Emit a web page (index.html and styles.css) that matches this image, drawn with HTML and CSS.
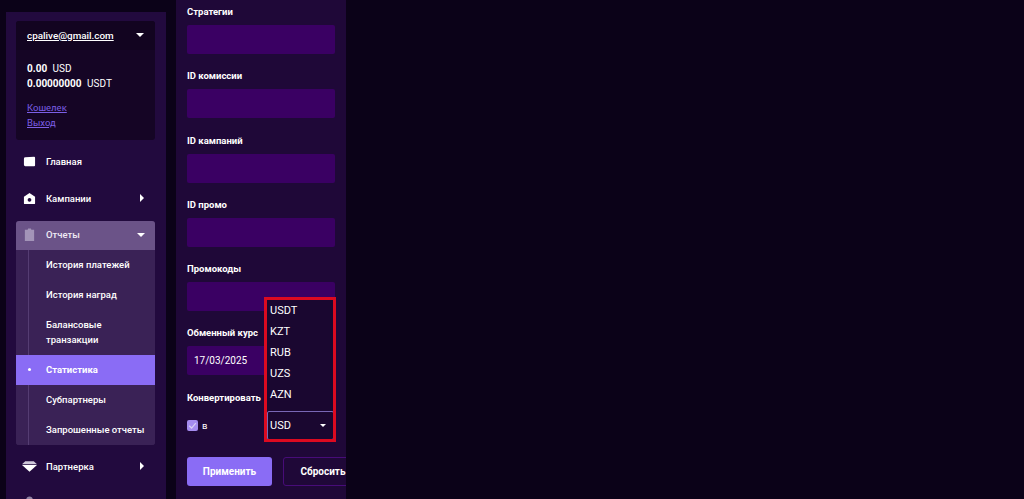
FILE: index.html
```html
<!DOCTYPE html>
<html lang="en">
<head>
    <meta charset="UTF-8">
    <meta name="viewport" content="width=device-width, initial-scale=1.0">
    <title>Статистика</title>
    <link rel="stylesheet" href="styles.css">
</head>
<body>
    <aside class="sidebar">
        <div class="account">
            <div class="account-head">
                <span class="account-email">cpalive@gmail.com</span>
                <span class="caret-down"></span>
            </div>
            <div class="account-body">
                <p class="balance"><b>0.00</b> USD</p>
                <p class="balance"><b>0.00000000</b> USDT</p>
                <a class="account-link first" href="#">Кошелек</a>
                <a class="account-link" href="#">Выход</a>
            </div>
        </div>

        <nav class="menu">
            <div class="menu-item">
                <svg class="menu-icon" viewBox="0 0 14 12"><path d="M1 3 Q1 1.500 2.500 1.500 L12 1 Q13 1 13 2 L13 10 Q13 11 12 11 L2.500 11 Q1 11 1 9.500 Z" fill="#fff"/></svg>
                <span>Главная</span>
            </div>
            <div class="menu-item">
                <svg class="menu-icon" viewBox="0 0 14 12"><path d="M7 0 L13 4 L13 11 Q13 12 12 12 L2 12 Q1 12 1 11 L1 4 Z M7 5.500 A2 2 0 1 0 7.001 5.500 Z" fill="#fff" fill-rule="evenodd"/></svg>
                <span>Кампании</span>
                <span class="caret-right"></span>
            </div>
            <div class="menu-group">
                <div class="menu-item open">
                    <svg class="menu-icon" viewBox="0 0 14 14"><path d="M2 2 L5 2 L5.500 0.500 L8.500 0.500 L9 2 L12 2 L12 14 L2 14 Z" fill="#a394b8"/></svg>
                    <span>Отчеты</span>
                    <span class="caret-down"></span>
                </div>
                <div class="submenu">
                    <a class="submenu-item">История платежей</a>
                    <a class="submenu-item">История наград</a>
                    <a class="submenu-item tall">Балансовые транзакции</a>
                    <a class="submenu-item active">Статистика</a>
                    <a class="submenu-item">Субпартнеры</a>
                    <a class="submenu-item">Запрошенные отчеты</a>
                </div>
            </div>
            <div class="menu-item">
                <svg class="menu-icon wide" viewBox="0 0 14 10"><path d="M0 3 L3 0 L11 0 L14 3 Z" fill="#cfc8da"/><path d="M0 3.500 L14 3.500 L7 10 Z" fill="#fff"/></svg>
                <span>Партнерка</span>
                <span class="caret-right"></span>
            </div>
            <div class="menu-item">
                <svg class="menu-icon" viewBox="0 0 14 14"><circle cx="7" cy="4" r="3.500" fill="#8f82a3"/></svg>
                <span class="dim">Мой</span>
            </div>
        </nav>
    </aside>

    <main class="filters">
        <label class="field-label">Стратегии</label>
        <div class="field"></div>
        <label class="field-label">ID комиссии</label>
        <div class="field"></div>
        <label class="field-label">ID кампаний</label>
        <div class="field"></div>
        <label class="field-label">ID промо</label>
        <div class="field"></div>
        <label class="field-label">Промокоды</label>
        <div class="field"></div>
        <label class="field-label">Обменный курс</label>
        <div class="field date">17/03/2025</div>
        <label class="field-label">Конвертировать</label>

        <div class="convert-row">
            <span class="checkbox">
                <svg viewBox="0 0 10 10"><path d="M2 5.200 L4.200 7.300 L8 2.800" fill="none" stroke="#d9d0f5" stroke-width="1.100"/></svg>
            </span>
            <span class="convert-in">в</span>
            <div class="currency">
                <div class="currency-highlight"></div>
                <ul class="currency-list">
                    <li>USDT</li>
                    <li>KZT</li>
                    <li>RUB</li>
                    <li>UZS</li>
                    <li>AZN</li>
                </ul>
                <div class="currency-select">
                    <span>USD</span>
                    <span class="caret-down small"></span>
                </div>
            </div>
        </div>

        <div class="actions">
            <button class="btn btn-primary">Применить</button>
            <button class="btn btn-outline">Сбросить</button>
        </div>
    </main>
</body>
</html>
```

FILE: styles.css
```css
* {
    margin: 0;
    padding: 0;
    box-sizing: border-box;
}

:root {
    --page: #0b0218;
    --panel: #220a3e;
    --panel-dark: #1f0838;
    --box: #150525;
    --field: #3a0063;
    --accent: #8a6cf5;
    --link: #7c5fe6;
    --white: #ffffff;
}

html, body {
    height: 100%;
    overflow: hidden;
}

body {
    display: flex;
    align-items: flex-start;
    gap: 10px;
    padding-left: 6px;
    background: var(--page);
    color: var(--white);
    font-family: Roboto, "Noto Sans", sans-serif;
    font-size: 9.500px;
}

/* Sidebar */
.sidebar {
    width: 160px;
    height: 487px;
    margin-top: 12px;
    padding: 9px 11px 0 10px;
    background: var(--panel);
    overflow: hidden;
}

.account {
    height: 119px;
    background: var(--box);
    border-radius: 3px;
}

.account-head {
    display: flex;
    align-items: center;
    justify-content: space-between;
    height: 29px;
    padding: 0 11px 1px;
    background: #120420;
    border-radius: 3px 3px 0 0;
}

.account-email {
    text-decoration: underline;
    font-size: 9.900px;
    font-weight: 500;
}

.account-body {
    padding: 11px 11px 0;
}

.balance {
    line-height: 15px;
    font-size: 10px;
}

.balance b {
    margin-right: 3px;
}

.account-link {
    display: block;
    width: max-content;
    line-height: 15px;
    color: var(--link);
    font-size: 9.500px;
}

.account-link.first {
    margin-top: 8.500px;
}

.caret-down {
    width: 0;
    height: 0;
    margin-left: auto;
    border-left: 4px solid transparent;
    border-right: 4px solid transparent;
    border-top: 4px solid var(--white);
}

.caret-down.small {
    border-left-width: 3px;
    border-right-width: 3px;
    border-top-width: 3px;
}

.caret-right {
    width: 0;
    height: 0;
    margin-left: auto;
    border-top: 4px solid transparent;
    border-bottom: 4px solid transparent;
    border-left: 4px solid var(--white);
    margin-right: 1px;
}

.menu {
    margin-top: 4px;
}

.menu-item {
    display: flex;
    align-items: center;
    height: 36px;
    padding: 0 10px 0 7px;
    font-weight: 500;
}

.menu-item:first-child {
    padding-bottom: 1px;
}

.menu-icon {
    width: 13px;
    height: 13px;
    margin-right: 10px;
    flex-shrink: 0;
}

.menu-icon.wide {
    width: 15px;
    margin: 0 9px 0 -1px;
}

.dim {
    opacity: 0.6;
}

.menu-group {
    margin: 5px 0 3px;
    border-radius: 3px;
    overflow: hidden;
    background: #3a2256;
}

.menu-item.open {
    height: 29px;
    padding-bottom: 2px;
    background: #6b5388;
    color: #f0ebf5;
}

.submenu {
    background: linear-gradient(90deg, #3a2256 0 12px, #553d73 12px 13px, #3a2256 13px);
}

.submenu-item {
    display: flex;
    align-items: center;
    height: 30px;
    padding: 0 0 1px 30px;
    font-weight: 500;
}

.submenu-item.tall {
    height: 45px;
    padding-right: 30px;
    line-height: 15px;
}

.submenu-item.active {
    position: relative;
    background: var(--accent);
    font-weight: 700;
}

.submenu-item.active::before {
    content: '';
    position: absolute;
    left: 12px;
    top: 13px;
    width: 3px;
    height: 3px;
    border-radius: 50%;
    background: var(--white);
}

/* Filters column */
.filters {
    width: 170px;
    height: 499px;
    padding: 6px 11px 0;
    background: var(--panel-dark);
    overflow: hidden;
}

.field-label {
    display: block;
    height: 19px;
    line-height: 12px;
    font-weight: 700;
}

.field {
    height: 29px;
    margin-bottom: 16.300px;
    padding-left: 7px;
    line-height: 29px;
    background: var(--field);
    border-radius: 2px;
    font-size: 10px;
}

.convert-row {
    display: flex;
    align-items: center;
    height: 29px;
}

.checkbox {
    display: block;
    width: 11px;
    height: 11px;
    border-radius: 2px;
    background: #a58cf0;
}

.checkbox svg {
    display: block;
    width: 11px;
    height: 11px;
}

.convert-in {
    margin-left: 4px;
    font-size: 9.500px;
}

.currency {
    position: relative;
    width: 67px;
    margin-left: auto;
    margin-right: 1px;
}

.currency-highlight {
    position: absolute;
    left: -3px;
    right: -2px;
    top: -114px;
    bottom: -2px;
    border: 3px solid #dc0a20;
    z-index: 1;
}

.currency-list {
    position: absolute;
    left: 0;
    right: 0;
    bottom: 100%;
    padding: 2px 0 6px;
    list-style: none;
    background: #1a0730;
}

.currency-list li {
    height: 21px;
    line-height: 21px;
    padding-left: 3px;
    font-size: 11px;
}

.currency-select {
    display: flex;
    align-items: center;
    height: 29px;
    padding: 0 7px 0 2px;
    border: 1px solid #7867b5;
    border-radius: 2px;
    background: #1a0730;
    font-size: 11px;
}

.actions {
    display: flex;
    gap: 11px;
    margin-top: 17px;
}

.btn {
    flex-shrink: 0;
    height: 29px;
    border-radius: 3px;
    color: var(--white);
    font-family: inherit;
    font-size: 10px;
    font-weight: 700;
}

.btn-primary {
    width: 85px;
    border: none;
    background: var(--accent);
}

.btn-outline {
    width: 80px;
    border: 1px solid #470c78;
    background: transparent;
}
```
